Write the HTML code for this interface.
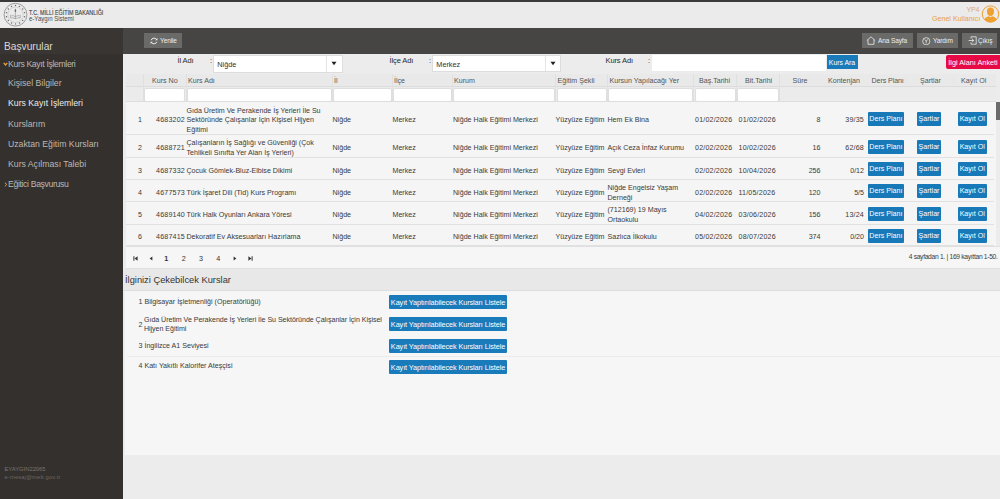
<!DOCTYPE html>
<html><head><meta charset="utf-8">
<style>
*{box-sizing:border-box}
html,body{margin:0;padding:0}
body{width:1000px;height:499px;overflow:hidden;position:relative;background:#ebebeb;font-family:"Liberation Sans",sans-serif;color:#333}
.a{position:absolute;white-space:nowrap}
#topbar{left:0;top:0;width:1000px;height:2px;background:#3a3a3a}
#header{left:0;top:2px;width:1000px;height:26px;background:#ebebeb}
#side{left:0;top:28px;width:123px;height:471px;background:#33302d}
#sidehead{left:0;top:28px;width:123px;height:26px;background:#393533}
#toolbar{left:123px;top:28px;width:877px;height:25.5px;background:#474543}
#content{left:123px;top:54px;width:877px;height:445px;background:#ececec}
.tbtn{position:absolute;top:33px;height:15px;background:#6a6a69;color:#f0f0f0;font-size:6.5px;line-height:15px;letter-spacing:-0.1px}
.side-i{position:absolute;left:8px;color:#bdb8b3;font-size:8.7px;line-height:10px}
.sel{position:absolute;top:55px;height:17px;background:#fff;border:1px solid #ddd}
.lbl{position:absolute;color:#2a2a2a;font-size:7.5px;line-height:10px;letter-spacing:-0.1px}

.td{position:absolute;white-space:nowrap;font-size:7.1px;line-height:9.7px;color:#3a3a3a}
.num{letter-spacing:0.18px}
.th{position:absolute;white-space:nowrap;top:75.8px;font-size:7.1px;line-height:10px;color:#555}
.tr{position:absolute;left:125.5px;width:868.5px;border-bottom:1px solid #e1e1e1}
.vl{position:absolute;top:74px;width:1px;height:28px;background:#e0e0e0}
.fi{position:absolute;top:87.5px;height:14.3px;background:#fff;border:1px solid #dedede;border-radius:2px}
.bb{position:absolute;height:14px;background:#1879b8;color:#fff;font-size:7.1px;line-height:15.5px;text-align:center;border-radius:1px}
.btnb{position:absolute;background:#1a7bbb;color:#fff;font-size:6.9px;line-height:15.5px;text-align:center}
.btnr{position:absolute;background:#e60b45;color:#fff;font-size:7.3px;line-height:15.5px;text-align:center;border-radius:2px 0 0 2px}
.seltxt{position:absolute;left:3px;top:3.5px;font-size:7.3px;line-height:10px;color:#333}
.selsep{position:absolute;top:0;width:1px;height:100%;background:#e4e4e4}
.arr{position:absolute;top:5.2px}
.pg{position:absolute;top:253.5px;font-size:6px;line-height:9px;color:#333}
.pn{position:absolute;top:253.5px;font-size:7.2px;line-height:10px;color:#333}
.lb{position:absolute;left:389px;width:118px;height:14px;background:#1a7bbb;color:#fff;font-size:7.3px;line-height:15.8px;text-align:center;letter-spacing:-0.1px;border-radius:1px}
</style></head><body>
<div class="a" id="topbar"></div>
<div class="a" id="header"></div>
<div class="a" id="side"></div>
<div class="a" id="sidehead"></div>
<div class="a" id="toolbar"></div>
<div class="a" id="content"></div>

<!-- header logo -->
<svg class="a" style="left:2px;top:1px" width="28" height="28" viewBox="0 0 28 28">
  <circle cx="13.5" cy="13.7" r="11.4" fill="none" stroke="#7a7a7a" stroke-width="0.7"/>
  <circle cx="13.5" cy="13.7" r="7.7" fill="none" stroke="#aaa" stroke-width="0.4"/>
  <g fill="#666"><circle cx="13.50" cy="4.50" r="0.7"/><circle cx="17.49" cy="5.41" r="0.7"/><circle cx="20.69" cy="7.96" r="0.7"/><circle cx="22.47" cy="11.65" r="0.7"/><circle cx="22.47" cy="15.75" r="0.7"/><circle cx="20.69" cy="19.44" r="0.7"/><circle cx="17.49" cy="21.99" r="0.7"/><circle cx="13.50" cy="22.90" r="0.7"/><circle cx="9.51" cy="21.99" r="0.7"/><circle cx="6.31" cy="19.44" r="0.7"/><circle cx="4.53" cy="15.75" r="0.7"/><circle cx="4.53" cy="11.65" r="0.7"/><circle cx="6.31" cy="7.96" r="0.7"/><circle cx="9.51" cy="5.41" r="0.7"/></g>
  <path d="M13.4 7.4 C12.3 9 12.3 10.4 13.4 11.6 C14.5 10.4 14.5 9 13.4 7.4 Z" fill="#6f6f6f"/>
  <path d="M13.4 11.5 L13.4 18 M8.6 13.8 L8.6 16.9 Q11 16.6 13.4 17.6 Q15.8 16.6 18.2 16.9 L18.2 13.8 M9.6 14.6 Q11.6 14.5 13.4 15.6 Q15.2 14.5 17.2 14.6" fill="none" stroke="#8a8a8a" stroke-width="0.6"/>
</svg>
<div class="a" style="left:29px;top:8.6px;font-size:6.9px;color:#3a3a3a;line-height:7px;transform:scaleX(0.78);transform-origin:0 0;-webkit-text-stroke:0.12px #444">T.C. MİLLİ EĞİTİM BAKANLIĞI</div>
<div class="a" style="left:29px;top:14.6px;font-size:6.9px;color:#4a4a4a;line-height:8px;transform:scaleX(0.87);transform-origin:0 0">e-Yaygın Sistemi</div>

<div class="a" style="left:966.5px;top:5.5px;font-size:7px;color:#dca878;line-height:8px;letter-spacing:-0.2px">YP4</div>
<div class="a" style="left:932px;top:14.3px;font-size:7.1px;color:#e9a040;line-height:10px">Genel Kullanıcı</div>
<svg class="a" style="left:981px;top:5px" width="19" height="19" viewBox="0 0 19 19">
  <circle cx="9.5" cy="9" r="8.2" fill="none" stroke="#f0a030" stroke-width="1"/>
  <path d="M9.5 2.6 C12 2.6 13.3 4.4 13 7 C12.8 9.4 11.5 11 9.5 11 C7.5 11 6.2 9.4 6 7 C5.7 4.4 7 2.6 9.5 2.6 Z M3.4 14.6 C4.2 12.4 6 11.6 7.6 11.2 L9.5 12 L11.4 11.2 C13 11.6 14.8 12.4 15.6 14.6 C14.2 16.3 12 17.2 9.5 17.2 C7 17.2 4.8 16.3 3.4 14.6 Z" fill="#f0a030"/>
</svg>

<!-- sidebar -->
<div class="a" style="left:4px;top:40px;font-size:10.2px;color:#dcd8d4;line-height:13px">Başvurular</div>
<svg class="a" style="left:3px;top:61.8px" width="5" height="4" viewBox="0 0 5 4"><path d="M0.7 0.8 L2.5 2.9 L4.3 0.8" fill="none" stroke="#f0a030" stroke-width="1.3"/></svg>
<div class="side-i" style="top:58.8px;font-size:8.7px;letter-spacing:-0.37px;color:#bdb8b3">Kurs Kayıt İşlemleri</div>
<div class="side-i" style="top:77.5px">Kişisel Bilgiler</div>
<div class="side-i" style="top:97.5px;color:#ecebea">Kurs Kayıt İşlemleri</div>
<div class="side-i" style="top:119px">Kurslarım</div>
<div class="side-i" style="top:139px">Uzaktan Eğitim Kursları</div>
<div class="side-i" style="top:159px">Kurs Açılması Talebi</div>
<svg class="a" style="left:3.5px;top:181.5px" width="4" height="5" viewBox="0 0 4 5"><path d="M0.8 0.6 L2.8 2.5 L0.8 4.4" fill="none" stroke="#f0a030" stroke-width="1"/></svg>
<div class="side-i" style="top:179.3px;font-size:8.7px;letter-spacing:-0.36px">Eğitici Başvurusu</div>
<div class="a" style="left:4.5px;top:465.8px;font-size:5.8px;color:#7a7570;line-height:7px">EYAYGIN22065</div>
<div class="a" style="left:4.5px;top:474.3px;font-size:5.7px;color:#6d6863;line-height:7px;letter-spacing:0.2px">e-mesaj@meb.gov.tr</div>

<!-- toolbar buttons -->
<div class="tbtn" style="left:144px;width:38px;padding-left:16px">Yenile</div>
<svg class="a" style="left:149.5px;top:36.5px" width="8" height="8" viewBox="0 0 8 8"><path d="M1.2 3.2 A3 3 0 0 1 6.6 2.6 M6.8 4.8 A3 3 0 0 1 1.4 5.4" fill="none" stroke="#f2f2f2" stroke-width="1"/><path d="M7.4 0.9 L7.4 3.3 L5 3.3 Z M0.6 7.1 L0.6 4.7 L3 4.7 Z" fill="#f2f2f2"/></svg>
<div class="tbtn" style="left:862px;width:51px;padding-left:16px">Ana Sayfa</div>
<svg class="a" style="left:866px;top:36px" width="10" height="9" viewBox="0 0 10 9"><path d="M0.8 4.6 L5 0.8 L9.2 4.6 M2 3.6 L2 8.3 L8 8.3 L8 3.6" fill="none" stroke="#ececec" stroke-width="0.8"/></svg>
<div class="tbtn" style="left:917px;width:41px;padding-left:16px">Yardım</div>
<svg class="a" style="left:922px;top:36.5px" width="8.5" height="8.5" viewBox="0 0 8.5 8.5"><circle cx="4.25" cy="4.25" r="3.6" fill="none" stroke="#ececec" stroke-width="0.8"/><path d="M2.8 2.4 L4.25 4.3 L5.7 2.4 M4.25 4.3 L4.25 6.3" fill="none" stroke="#ececec" stroke-width="0.8"/></svg>
<div class="tbtn" style="left:962px;width:35px;padding-left:16px">Çıkış</div>
<svg class="a" style="left:967.5px;top:36px" width="9" height="9" viewBox="0 0 9 9"><path d="M3 0.8 L8.2 0.8 L8.2 8.2 L3 8.2 M3 0.8 L3 2.6 M3 8.2 L3 6.4 M0.6 4.5 L5.8 4.5 M4 2.8 L5.8 4.5 L4 6.2" fill="none" stroke="#ececec" stroke-width="0.8"/></svg>

<!-- filter row -->
<div class="lbl" style="left:177.5px;top:55.5px">İl Adı</div>
<div class="lbl" style="left:210px;top:56px">:</div>
<div class="sel" style="left:213.3px;width:129.5px;height:17.5px"><span class="seltxt">Niğde</span><span class="selsep" style="left:111.5px"></span><svg class="arr" style="left:116.5px" width="6" height="5" viewBox="0 0 6 5"><path d="M0.5 0.8 L5.5 0.8 L3 4.3 Z" fill="#222"/></svg></div>
<div class="lbl" style="left:389.5px;top:55.5px">İlçe Adı</div>
<div class="lbl" style="left:429px;top:56px">:</div>
<div class="sel" style="left:432.3px;width:129px"><span class="seltxt">Merkez</span><span class="selsep" style="left:111.5px"></span><svg class="arr" style="left:117px" width="6" height="5" viewBox="0 0 6 5"><path d="M0.5 0.8 L5.5 0.8 L3 4.3 Z" fill="#222"/></svg></div>
<div class="lbl" style="left:605.5px;top:55.5px">Kurs Adı</div>
<div class="lbl" style="left:648px;top:56px">:</div>
<div class="a" style="left:652px;top:55px;width:174px;height:16px;background:#fff"></div>
<div class="btnb" style="left:826.5px;top:55px;width:31px;height:14px">Kurs Ara</div>
<div class="btnr" style="left:946px;top:55px;width:54px;height:14px">İlgi Alanı Anketi</div>

<!-- table -->
<div class="a" style="left:125.5px;top:73.5px;width:870.5px;height:13.2px;background:#e9e9e9;border-bottom:1px solid #dcdcdc"></div>
<div class="a" style="left:125.5px;top:86.7px;width:870.5px;height:15.8px;background:#ebebeb;border-bottom:1px solid #dedede"></div>
<div class="a" style="left:125.5px;top:102px;width:870.5px;height:144px;background:#f5f5f5"></div>
<div class="vl" style="left:143px"></div>
<div class="vl" style="left:186px"></div>
<div class="vl" style="left:332px"></div>
<div class="vl" style="left:392px"></div>
<div class="vl" style="left:452px"></div>
<div class="vl" style="left:555px"></div>
<div class="vl" style="left:607px"></div>
<div class="vl" style="left:693px"></div>
<div class="vl" style="left:736px"></div>
<div class="vl" style="left:779px"></div>
<div class="vl" style="left:904.5px;opacity:.35;top:76px;height:9px"></div>
<div class="vl" style="left:952.5px;opacity:.35;top:76px;height:9px"></div>
<div class="th" style="left:152px">Kurs No</div>
<div class="th" style="left:188px">Kurs Adı</div>
<div class="th" style="left:334px">İl</div>
<div class="th" style="left:394px">İlçe</div>
<div class="th" style="left:454px">Kurum</div>
<div class="th" style="left:557.5px">Eğitim Şekli</div>
<div class="th" style="left:609.5px">Kursun Yapılacağı Yer</div>
<div class="th" style="left:699px">Baş.Tarihi</div>
<div class="th" style="left:745px">Bit.Tarihi</div>
<div class="th" style="left:792.5px">Süre</div>
<div class="th" style="left:828px">Kontenjan</div>
<div class="th" style="left:871.6px;letter-spacing:-0.1px">Ders Planı</div>
<div class="th" style="left:920px">Şartlar</div>
<div class="th" style="left:961px">Kayıt Ol</div>
<div class="fi" style="left:144.0px;width:41.0px"></div>
<div class="fi" style="left:187.0px;width:144.5px"></div>
<div class="fi" style="left:333.0px;width:58.5px"></div>
<div class="fi" style="left:393.0px;width:58.5px"></div>
<div class="fi" style="left:453.0px;width:101.5px"></div>
<div class="fi" style="left:556.5px;width:50.0px"></div>
<div class="fi" style="left:608.0px;width:84.5px"></div>
<div class="fi" style="left:694.5px;width:41.0px"></div>
<div class="fi" style="left:736.5px;width:42.0px"></div>
<div class="tr" style="top:102px;height:33px"></div>
<div class="td" style="right:858px;top:116.2px;text-align:right">1</div>
<div class="td num" style="right:815px;top:116.2px;text-align:right">4683202</div>
<div class="td" style="left:186.5px;top:106.5px">Gıda Üretim Ve Perakende İş Yerleri İle Su<br>Sektöründe Çalışanlar İçin Kişisel Hijyen<br>Eğitimi</div>
<div class="td" style="left:332.5px;top:116.2px">Niğde</div>
<div class="td" style="left:392.5px;top:116.2px">Merkez</div>
<div class="td" style="left:453px;top:116.2px">Niğde Halk Eğitimi Merkezi</div>
<div class="td" style="left:555.5px;top:116.2px">Yüzyüze Eğitim</div>
<div class="td" style="left:607.5px;top:116.2px">Hem Ek Bina</div>
<div class="td num" style="left:695px;top:116.2px">01/02/2026</div>
<div class="td num" style="left:738.5px;top:116.2px">01/02/2026</div>
<div class="td" style="right:179.5px;top:116.2px;text-align:right">8</div>
<div class="td num" style="right:136px;top:116.2px;text-align:right">39/35</div>
<div class="bb" style="left:867.8px;top:112.0px;width:36.2px">Ders Planı</div>
<div class="bb" style="left:917px;top:112.0px;width:24px">Şartlar</div>
<div class="bb" style="left:957.5px;top:112.0px;width:29.5px">Kayıt Ol</div>
<div class="tr" style="top:135px;height:23px"></div>
<div class="td" style="right:858px;top:144.2px;text-align:right">2</div>
<div class="td num" style="right:815px;top:144.2px;text-align:right">4688721</div>
<div class="td" style="left:186.5px;top:139.4px">Çalışanların İş Sağlığı ve Güvenliği (Çok<br>Tehlikeli Sınıfta Yer Alan İş Yerleri)</div>
<div class="td" style="left:332.5px;top:144.2px">Niğde</div>
<div class="td" style="left:392.5px;top:144.2px">Merkez</div>
<div class="td" style="left:453px;top:144.2px">Niğde Halk Eğitimi Merkezi</div>
<div class="td" style="left:555.5px;top:144.2px">Yüzyüze Eğitim</div>
<div class="td" style="left:607.5px;top:144.2px">Açık Ceza İnfaz Kurumu</div>
<div class="td num" style="left:695px;top:144.2px">02/02/2026</div>
<div class="td num" style="left:738.5px;top:144.2px">10/02/2026</div>
<div class="td" style="right:179.5px;top:144.2px;text-align:right">16</div>
<div class="td num" style="right:136px;top:144.2px;text-align:right">62/68</div>
<div class="bb" style="left:867.8px;top:139.9px;width:36.2px">Ders Planı</div>
<div class="bb" style="left:917px;top:139.9px;width:24px">Şartlar</div>
<div class="bb" style="left:957.5px;top:139.9px;width:29.5px">Kayıt Ol</div>
<div class="tr" style="top:158px;height:22px"></div>
<div class="td" style="right:858px;top:166.8px;text-align:right">3</div>
<div class="td num" style="right:815px;top:166.8px;text-align:right">4687332</div>
<div class="td" style="left:186.5px;top:166.8px">Çocuk Gömlek-Bluz-Elbise Dikimi</div>
<div class="td" style="left:332.5px;top:166.8px">Niğde</div>
<div class="td" style="left:392.5px;top:166.8px">Merkez</div>
<div class="td" style="left:453px;top:166.8px">Niğde Halk Eğitimi Merkezi</div>
<div class="td" style="left:555.5px;top:166.8px">Yüzyüze Eğitim</div>
<div class="td" style="left:607.5px;top:166.8px">Sevgi Evleri</div>
<div class="td num" style="left:695px;top:166.8px">02/02/2026</div>
<div class="td num" style="left:738.5px;top:166.8px">10/04/2026</div>
<div class="td" style="right:179.5px;top:166.8px;text-align:right">256</div>
<div class="td" style="right:136px;top:166.8px;text-align:right">0/12</div>
<div class="bb" style="left:867.8px;top:162.4px;width:36.2px">Ders Planı</div>
<div class="bb" style="left:917px;top:162.4px;width:24px">Şartlar</div>
<div class="bb" style="left:957.5px;top:162.4px;width:29.5px">Kayıt Ol</div>
<div class="tr" style="top:180px;height:22px"></div>
<div class="td" style="right:858px;top:188.8px;text-align:right">4</div>
<div class="td num" style="right:815px;top:188.8px;text-align:right">4677573</div>
<div class="td" style="left:186.5px;top:188.8px">Türk İşaret Dili (Tid) Kurs Programı</div>
<div class="td" style="left:332.5px;top:188.8px">Niğde</div>
<div class="td" style="left:392.5px;top:188.8px">Merkez</div>
<div class="td" style="left:453px;top:188.8px">Niğde Halk Eğitimi Merkezi</div>
<div class="td" style="left:555.5px;top:188.8px">Yüzyüze Eğitim</div>
<div class="td" style="left:607.5px;top:183.9px">Niğde Engelsiz Yaşam<br>Derneği</div>
<div class="td num" style="left:695px;top:188.8px">02/02/2026</div>
<div class="td num" style="left:738.5px;top:188.8px">11/05/2026</div>
<div class="td" style="right:179.5px;top:188.8px;text-align:right">120</div>
<div class="td" style="right:136px;top:188.8px;text-align:right">5/5</div>
<div class="bb" style="left:867.8px;top:184.4px;width:36.2px">Ders Planı</div>
<div class="bb" style="left:917px;top:184.4px;width:24px">Şartlar</div>
<div class="bb" style="left:957.5px;top:184.4px;width:29.5px">Kayıt Ol</div>
<div class="tr" style="top:202px;height:23px"></div>
<div class="td" style="right:858px;top:211.2px;text-align:right">5</div>
<div class="td num" style="right:815px;top:211.2px;text-align:right">4689140</div>
<div class="td" style="left:186.5px;top:211.2px">Türk Halk Oyunları Ankara Yöresi</div>
<div class="td" style="left:332.5px;top:211.2px">Niğde</div>
<div class="td" style="left:392.5px;top:211.2px">Merkez</div>
<div class="td" style="left:453px;top:211.2px">Niğde Halk Eğitimi Merkezi</div>
<div class="td" style="left:555.5px;top:211.2px">Yüzyüze Eğitim</div>
<div class="td" style="left:607.5px;top:206.4px">(712169) 19 Mayıs<br>Ortaokulu</div>
<div class="td num" style="left:695px;top:211.2px">04/02/2026</div>
<div class="td num" style="left:738.5px;top:211.2px">03/06/2026</div>
<div class="td" style="right:179.5px;top:211.2px;text-align:right">156</div>
<div class="td num" style="right:136px;top:211.2px;text-align:right">13/24</div>
<div class="bb" style="left:867.8px;top:206.9px;width:36.2px">Ders Planı</div>
<div class="bb" style="left:917px;top:206.9px;width:24px">Şartlar</div>
<div class="bb" style="left:957.5px;top:206.9px;width:29.5px">Kayıt Ol</div>
<div class="tr" style="top:225px;height:21px"></div>
<div class="td" style="right:858px;top:233.2px;text-align:right">6</div>
<div class="td num" style="right:815px;top:233.2px;text-align:right">4687415</div>
<div class="td" style="left:186.5px;top:233.2px">Dekoratif Ev Aksesuarları Hazırlama</div>
<div class="td" style="left:332.5px;top:233.2px">Niğde</div>
<div class="td" style="left:392.5px;top:233.2px">Merkez</div>
<div class="td" style="left:453px;top:233.2px">Niğde Halk Eğitimi Merkezi</div>
<div class="td" style="left:555.5px;top:233.2px">Yüzyüze Eğitim</div>
<div class="td" style="left:607.5px;top:233.2px">Sazlıca İlkokulu</div>
<div class="td num" style="left:695px;top:233.2px">05/02/2026</div>
<div class="td num" style="left:738.5px;top:233.2px">08/07/2026</div>
<div class="td" style="right:179.5px;top:233.2px;text-align:right">374</div>
<div class="td" style="right:136px;top:233.2px;text-align:right">0/20</div>
<div class="bb" style="left:867.8px;top:228.9px;width:36.2px">Ders Planı</div>
<div class="bb" style="left:917px;top:228.9px;width:24px">Şartlar</div>
<div class="bb" style="left:957.5px;top:228.9px;width:29.5px">Kayıt Ol</div>
<div class="a" style="left:996px;top:102px;width:4px;height:17.5px;background:#6b6b6b"></div>

<!-- pager -->
<div class="a" style="left:125.5px;top:246px;width:874.5px;height:23px;background:#f6f6f6;border-top:1px solid #e0e0e0;border-bottom:1px solid #e0e0e0"></div>
<svg class="a" style="left:132.5px;top:255.5px" width="5" height="5" viewBox="0 0 5 5"><path d="M0.4 0.3 L1.4 0.3 L1.4 4.7 L0.4 4.7 Z M4.6 0.3 L4.6 4.7 L1.6 2.5 Z" fill="#333"/></svg>
<svg class="a" style="left:148.5px;top:255.7px" width="4" height="5" viewBox="0 0 4 5"><path d="M3.4 0.6 L3.4 4.4 L0.6 2.5 Z" fill="#333"/></svg>
<div class="pn" style="left:164.2px;font-weight:bold">1</div>
<div class="pn" style="left:181.8px">2</div>
<div class="pn" style="left:199px">3</div>
<div class="pn" style="left:216.2px">4</div>
<svg class="a" style="left:232.6px;top:255.7px" width="4" height="5" viewBox="0 0 4 5"><path d="M0.6 0.6 L0.6 4.4 L3.4 2.5 Z" fill="#333"/></svg>
<svg class="a" style="left:247.6px;top:255.5px" width="5" height="5" viewBox="0 0 5 5"><path d="M0.4 0.3 L3.4 2.5 L0.4 4.7 Z M3.6 0.3 L4.6 0.3 L4.6 4.7 L3.6 4.7 Z" fill="#333"/></svg>
<div class="td" style="right:2.4px;top:252.4px;font-size:6.7px;letter-spacing:-0.3px">4 sayfadan 1. | 169 kayıttan 1-50.</div>

<!-- panel -->
<div class="a" style="left:123px;top:269px;width:877px;height:21.5px;background:#e8e8e8;border-bottom:1px solid #dedede"></div>
<div class="a" style="left:125px;top:273.5px;font-size:9.3px;line-height:13px;color:#333">İlginizi Çekebilcek Kurslar</div>
<div class="a" style="left:125px;top:290.5px;width:875px;height:164px;background:#f6f6f6"></div>
<div class="td" style="left:138.5px;top:298.3px">1 Bilgisayar İşletmenliği (Operatörlüğü)</div>
<div class="td" style="left:138.5px;top:320.5px">2</div>
<div class="td" style="left:144px;top:315.8px;line-height:9.6px;letter-spacing:-0.05px">Gıda Üretim Ve Perakende İş Yerleri İle Su Sektöründe Çalışanlar İçin Kişisel<br>Hijyen Eğitimi</div>
<div class="td" style="left:138.5px;top:341.8px">3 İngilizce A1 Seviyesi</div>
<div class="a" style="left:127px;top:355.5px;width:873px;height:1px;background:#ebebeb"></div>
<div class="td" style="left:138.5px;top:362.3px">4 Katı Yakıtlı Kalorifer Ateşçisi</div>
<div class="lb" style="top:295px">Kayıt Yaptırılabilecek Kursları Listele</div>
<div class="lb" style="top:317px">Kayıt Yaptırılabilecek Kursları Listele</div>
<div class="lb" style="top:339px">Kayıt Yaptırılabilecek Kursları Listele</div>
<div class="lb" style="top:360px">Kayıt Yaptırılabilecek Kursları Listele</div>


</body></html>
